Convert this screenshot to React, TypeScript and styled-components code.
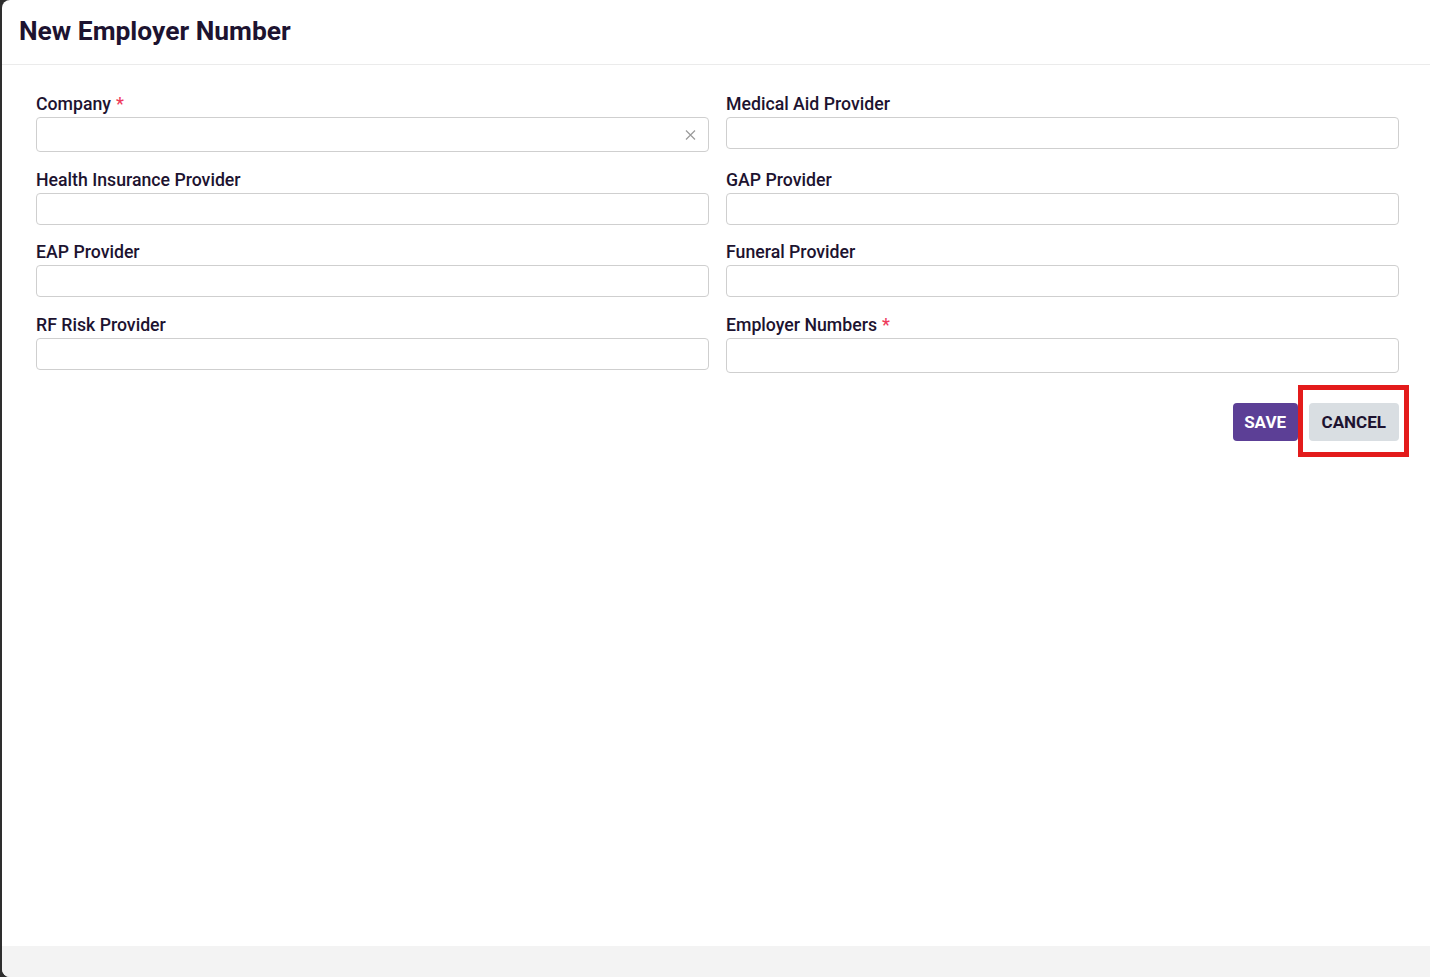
import React from "react";
import styled, { createGlobalStyle } from "styled-components";

const Global = createGlobalStyle`
  html, body { margin: 0; padding: 0; }
  body { font-family: Roboto, "Liberation Sans", Arial, sans-serif; background: #2e2e2e; }
  * { box-sizing: border-box; }
`;

const Shell = styled.div`
  height: 977px;
  padding-left: 2px;
  display: flex;
`;

const Dialog = styled.div`
  flex: 1;
  display: flex;
  flex-direction: column;
  background: #fff;
  border-radius: 8px 0 0 8px;
  overflow: hidden;
`;

const Header = styled.div`
  height: 65px;
  border-bottom: 1px solid #ebebeb;
  display: flex;
  align-items: center;
  padding-left: 17px;
`;

const Title = styled.h1`
  margin: 0;
  font-size: 26.4px;
  font-weight: 700;
  color: #1d1330;
  position: relative;
  top: -1px;
`;

const Body = styled.div`
  flex: 1;
  padding: 27px 31px 0 34px;
`;

const Grid = styled.div`
  display: grid;
  grid-template-columns: 1fr 1fr;
  column-gap: 17px;
`;

const Field = styled.div`
  display: flex;
  flex-direction: column;
  margin-bottom: 15.5px;
`;

const Label = styled.label`
  font-size: 17.7px;
  font-weight: 500;
  color: #1d1330;
  line-height: 24px;
  margin-bottom: 1px;
`;

const Star = styled.span`
  color: #ee3b5b;
  margin-left: 5px;
`;

const InputBox = styled.div<{ $h: number }>`
  position: relative;
  height: ${(p) => p.$h}px;
  border: 1px solid #cfcfcf;
  border-radius: 4px;
  background: #fff;
`;

const Clear = styled.span`
  position: absolute;
  right: 12px;
  top: 50%;
  transform: translateY(-50%);
  display: flex;
`;

const Actions = styled.div`
  display: flex;
  justify-content: flex-end;
  gap: 11px;
  margin-top: 15px;
`;

const Button = styled.button<{ $variant: "primary" | "secondary" }>`
  height: 38px;
  border: none;
  border-radius: 4px;
  font-family: Roboto, "Liberation Sans", Arial, sans-serif;
  font-size: 17px;
  font-weight: 700;
  padding: 0 ${(p) => (p.$variant === "primary" ? "11.5px" : "13px")};
  background: ${(p) => (p.$variant === "primary" ? "#5c3f96" : "#d9dee2")};
  color: ${(p) => (p.$variant === "primary" ? "#fff" : "#1d1330")};
  cursor: pointer;
`;

const Highlight = styled.div`
  position: relative;
  &::after {
    content: "";
    position: absolute;
    left: -11px;
    right: -10px;
    top: -18px;
    bottom: -16px;
    border: 5px solid #e31b1b;
    pointer-events: none;
  }
`;

const Footer = styled.div`
  height: 31px;
  background: #f3f3f3;
`;

type F = { label: string; req?: boolean; h: number; clear?: boolean };

const fields: F[] = [
  { label: "Company", req: true, h: 35, clear: true },
  { label: "Medical Aid Provider", h: 32 },
  { label: "Health Insurance Provider", h: 32 },
  { label: "GAP Provider", h: 32 },
  { label: "EAP Provider", h: 32 },
  { label: "Funeral Provider", h: 32 },
  { label: "RF Risk Provider", h: 32 },
  { label: "Employer Numbers", req: true, h: 35 },
];

export default function App() {
  return (
    <>
      <Global />
      <Shell>
        <Dialog>
          <Header>
            <Title>New Employer Number</Title>
          </Header>
          <Body>
            <Grid>
              {fields.map((f) => (
                <Field key={f.label}>
                  <Label>
                    {f.label}
                    {f.req && <Star>*</Star>}
                  </Label>
                  <InputBox $h={f.h}>
                    {f.clear && (
                      <Clear>
                        <svg width="11" height="11" viewBox="0 0 11 11">
                          <path d="M1 1L10 10M10 1L1 10" stroke="#9a9a9a" strokeWidth="1.2" />
                        </svg>
                      </Clear>
                    )}
                  </InputBox>
                </Field>
              ))}
            </Grid>
            <Actions>
              <Button $variant="primary">SAVE</Button>
              <Highlight>
                <Button $variant="secondary">CANCEL</Button>
              </Highlight>
            </Actions>
          </Body>
          <Footer />
        </Dialog>
      </Shell>
    </>
  );
}
